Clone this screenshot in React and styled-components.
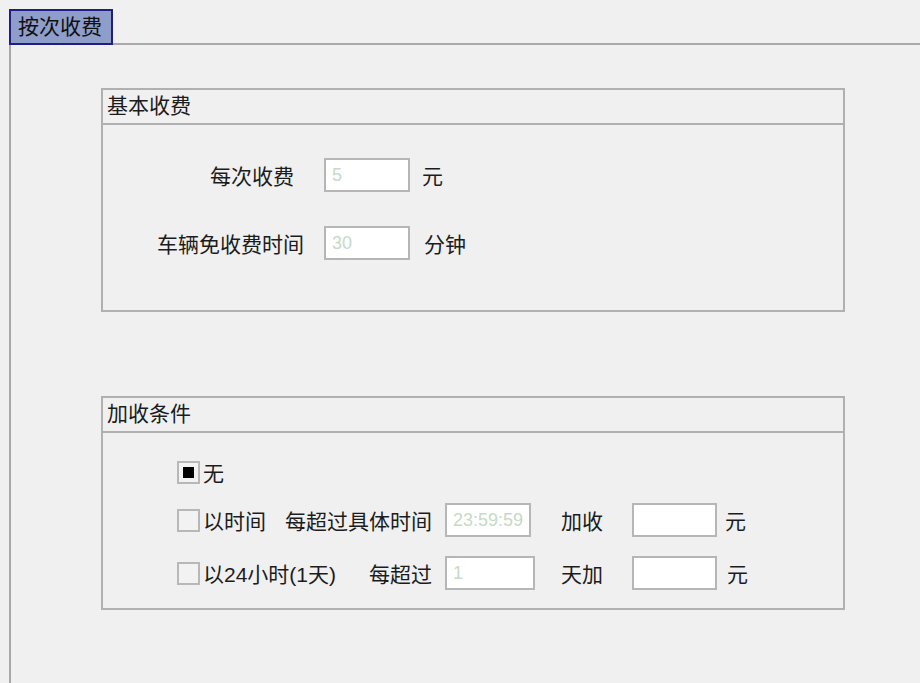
import React from 'react';
import styled, { createGlobalStyle } from 'styled-components';

// page defaults
const GlobalStyle = createGlobalStyle`
  * { box-sizing: border-box; }
  html, body {
    margin: 0;
    padding: 0;
    background: #f0f0f0;
  }
  body {
    font-family: "Liberation Sans", "Noto Sans CJK SC", sans-serif;
    font-size: 21px;
    color: #1c1c1c;
  }
`;

const Page = styled.div`
  min-height: 100vh;
  padding: 9px 0 0 9px;
  display: flex;
  flex-direction: column;
`;

const TabStrip = styled.div`
  display: flex;
  position: relative;
  z-index: 1;
  margin-bottom: -2px;
`;

const Tab = styled.div`
  width: 104px;
  height: 36px;
  border: 2px solid #1f1f82;
  background: #8e9dca;
  padding-left: 7px;
  line-height: 31px;
  color: #101010;
`;

const Panel = styled.div`
  flex: 1;
  border-top: 2px solid #a9a9a9;
  border-left: 2px solid #a9a9a9;
  padding: 43px 75px 0 90px;
`;

const GroupBox = styled.section`
  border: 2px solid #b0b0b0;

  & + & {
    margin-top: 84px;
  }
`;

const GroupTitle = styled.div`
  height: 35px;
  line-height: 32px;
  padding-left: 4px;
  border-bottom: 2px solid #b0b0b0;
`;

const FeeBody = styled.div`
  display: flex;
  flex-direction: column;
  gap: 34px;
  padding: 33px 0 50px;
`;

const FieldRow = styled.div`
  display: flex;
  align-items: center;
  height: 34px;
`;

const FieldLabel = styled.span`
  width: 221px;
  text-align: right;
  padding-right: ${p => p.$gap}px;
  white-space: nowrap;
`;

const ValueInput = styled.input`
  width: ${p => p.$w || 86}px;
  height: 34px;
  border: 2px solid #b6b6b6;
  background: #ffffff;
  padding: 0 6px;
  font-family: "Liberation Sans", sans-serif;
  font-size: 18px;
  color: #c6dac6;
  outline: none;
`;

const Unit = styled.span`
  margin-left: ${p => p.$gap || 12}px;
  white-space: nowrap;
`;

const ExtraGrid = styled.div`
  display: grid;
  grid-template-columns: 268px 88px 99px 85px auto;
  grid-template-rows: 24px 34px 34px;
  row-gap: 19px;
  align-items: center;
  padding: 27px 0 18px 74px;
`;

const LeadCell = styled.div`
  grid-column: 1;
  display: flex;
  align-items: center;
  justify-content: space-between;
  padding-right: 13px;
  white-space: nowrap;
`;

const CheckOption = styled.label`
  display: flex;
  align-items: center;
  gap: 3px;
`;

const CheckBox = styled.span`
  width: 23px;
  height: 23px;
  border: 2px solid #b8b8b8;
  background: #f2f2f2;
  display: flex;
  align-items: center;
  justify-content: center;

  &::after {
    content: '';
    width: 11px;
    height: 11px;
    background: ${p => (p.$checked ? '#000' : 'transparent')};
  }
`;

const CellText = styled.span`
  padding-left: ${p => p.$indent || 0}px;
  white-space: nowrap;
`;

export default function App() {
  return (
    <>
      <GlobalStyle />
      <Page>
        <TabStrip>
          <Tab>按次收费</Tab>
        </TabStrip>
        <Panel>
          <GroupBox>
            <GroupTitle>基本收费</GroupTitle>
            <FeeBody>
              <FieldRow>
                <FieldLabel $gap={30}>每次收费</FieldLabel>
                <ValueInput readOnly value="5" />
                <Unit>元</Unit>
              </FieldRow>
              <FieldRow>
                <FieldLabel $gap={20}>车辆免收费时间</FieldLabel>
                <ValueInput readOnly value="30" />
                <Unit $gap={14}>分钟</Unit>
              </FieldRow>
            </FeeBody>
          </GroupBox>

          <GroupBox>
            <GroupTitle>加收条件</GroupTitle>
            <ExtraGrid>
              <LeadCell>
                <CheckOption>
                  <CheckBox $checked />
                  无
                </CheckOption>
              </LeadCell>
              <div />
              <div />
              <div />
              <div />

              <LeadCell>
                <CheckOption>
                  <CheckBox />
                  以时间
                </CheckOption>
                <span>每超过具体时间</span>
              </LeadCell>
              <ValueInput readOnly value="23:59:59" $w={86} />
              <CellText $indent={28}>加收</CellText>
              <ValueInput readOnly value="" $w={85} />
              <CellText $indent={8}>元</CellText>

              <LeadCell>
                <CheckOption>
                  <CheckBox />
                  以24小时(1天)
                </CheckOption>
                <span>每超过</span>
              </LeadCell>
              <ValueInput readOnly value="1" $w={90} />
              <CellText $indent={28}>天加</CellText>
              <ValueInput readOnly value="" $w={85} />
              <CellText $indent={10}>元</CellText>
            </ExtraGrid>
          </GroupBox>
        </Panel>
      </Page>
    </>
  );
}
